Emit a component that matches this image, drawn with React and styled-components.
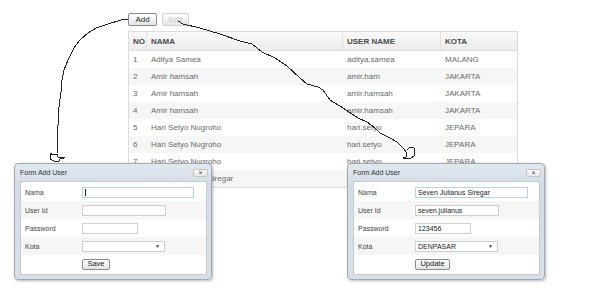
import React from "react"
import styled, { createGlobalStyle } from "styled-components"

const GlobalStyle = createGlobalStyle`
  html, body {
    margin: 0;
    padding: 0;
    background: #fff;
  }
  body {
    font-family: "Liberation Sans", Arial, sans-serif;
  }
`

const Stage = styled.div`
  position: relative;
  width: 600px;
  height: 300px;
  overflow: hidden;
  box-sizing: border-box;
  padding: 13px 0 0 128px;
`

const Toolbar = styled.div`
  display: flex;
  gap: 5px;
  height: 13px;
`

const Button = styled.button`
  font-family: inherit;
  font-size: ${(p) => p.$size || 8}px;
  height: ${(p) => p.$h || 13}px;
  width: ${(p) => p.$w}px;
  padding: 0;
  box-sizing: border-box;
  border: 1px solid ${(p) => (p.disabled ? "#d2d2d2" : "#8c8c8c")};
  border-radius: 2px;
  background: linear-gradient(#ffffff, #e4e4e4);
  color: ${(p) => (p.disabled ? "#c2c2c2" : "#222")};
  line-height: 1;
`

const Table = styled.div`
  margin-top: 5px;
  width: 390px;
  border: 1px solid #dcdcdc;
  box-sizing: border-box;
`

const Row = styled.div`
  display: grid;
  grid-template-columns: 17px 196px 98px 1fr;
  height: ${(p) => (p.$head ? 18 : 17)}px;
  align-items: center;
  background: ${(p) =>
    p.$head ? "linear-gradient(#fafafa, #ececec)" : p.$odd ? "#f6f6f6" : "#fff"};
  border-bottom: ${(p) => (p.$head ? "1px solid #dcdcdc" : "none")};
  font-size: 8px;
  font-weight: ${(p) => (p.$head ? "bold" : "normal")};
  color: ${(p) => (p.$head ? "#4a4a4a" : "#6a6a6a")};
`

const Cell = styled.div`
  height: 100%;
  display: flex;
  align-items: center;
  padding-left: ${(p) => (p.$first ? 3 : 4)}px;
  border-left: 1px solid ${(p) => (p.$head && !p.$first ? "#e2e2e2" : "transparent")};
  white-space: nowrap;
  overflow: hidden;
`

const Window = styled.div`
  position: absolute;
  left: ${(p) => p.$x}px;
  top: 163px;
  width: 198px;
  height: 117px;
  box-sizing: border-box;
  border: 1px solid #9ea9b4;
  border-radius: 4px;
  background: linear-gradient(#e1e9f0, #d4dde6 20px, #d8e0e7);
  box-shadow: 1px 1px 3px rgba(0, 0, 0, 0.28);
  padding: 0 4px 4px 5px;
  display: flex;
  flex-direction: column;
`

const WinHeader = styled.div`
  height: 18px;
  display: flex;
  align-items: center;
  justify-content: space-between;
  font-size: 7px;
  color: #333;
`

const CloseBtn = styled.div`
  width: 15px;
  height: 8px;
  margin-right: -1px;
  box-sizing: border-box;
  border: 1px solid #c4c4c4;
  border-radius: 2px;
  background: linear-gradient(#ffffff, #e6e6e6);
  font-size: 7px;
  line-height: 6px;
  text-align: center;
  color: #444;
`

const Panel = styled.div`
  flex: 1;
  background: #fff;
  border: 1px solid #c3cbd3;
  padding: 1px 0;
`

const FormRow = styled.div`
  display: grid;
  grid-template-columns: 56px 1fr;
  height: 18px;
  align-items: center;
  background: ${(p) => (p.$odd ? "#f6f6f6" : "#fff")};
  font-size: 7px;
  color: #444;
`

const Label = styled.div`
  padding-left: 4px;
`

const InputCell = styled.div`
  padding-left: 5px;
  display: flex;
  align-items: center;
`

const Field = styled.div`
  position: relative;
  width: ${(p) => p.$w}px;
  height: 11px;
  box-sizing: border-box;
  border: 1px solid ${(p) => (p.$focus ? "#b9d1ea" : "#cfcfcf")};
  background: #fff;
  font-size: 7px;
  line-height: 9px;
  padding: 0 2px;
  color: #222;
  white-space: nowrap;
  overflow: hidden;
`

const Caret = styled.span`
  display: inline-block;
  width: 1px;
  height: 7px;
  background: #222;
  vertical-align: middle;
`

const Arrow = styled.span`
  position: absolute;
  right: 4px;
  top: 0;
  font-size: 5px;
  line-height: 9px;
  color: #444;
`

const Overlay = styled.svg`
  position: absolute;
  left: 0;
  top: 0;
  pointer-events: none;
`

const users = [
  ["1", "Aditya Samea", "aditya.samea", "MALANG"],
  ["2", "Amir hamsah", "amir.ham", "JAKARTA"],
  ["3", "Amir hamsah", "amir.hamsah", "JAKARTA"],
  ["4", "Amir hamsah", "amir.hamsah", "JAKARTA"],
  ["5", "Hari Setyo Nugroho", "hari.setyo", "JEPARA"],
  ["6", "Hari Setyo Nugroho", "hari.setyo", "JEPARA"],
  ["7", "Hari Setyo Nugroho", "hari.setyo", "JEPARA"],
  ["8", "Seven Julianus Siregar", "seven.julianus", "DENPASAR"],
]

const UserForm = ({ x, data, action, actionWidth }) => (
  <Window $x={x}>
    <WinHeader>
      <span>Form Add User</span>
      <CloseBtn>×</CloseBtn>
    </WinHeader>
    <Panel>
      <FormRow>
        <Label>Nama</Label>
        <InputCell>
          <Field $w={data ? 113 : 112} $focus>
            {data ? data.nama : <Caret />}
          </Field>
        </InputCell>
      </FormRow>
      <FormRow $odd>
        <Label>User Id</Label>
        <InputCell>
          <Field $w={84}>{data && data.user}</Field>
        </InputCell>
      </FormRow>
      <FormRow>
        <Label>Password</Label>
        <InputCell>
          <Field $w={56}>{data && data.pass}</Field>
        </InputCell>
      </FormRow>
      <FormRow $odd>
        <Label>Kota</Label>
        <InputCell>
          <Field $w={83}>
            {data && data.kota}
            <Arrow>▼</Arrow>
          </Field>
        </InputCell>
      </FormRow>
      <FormRow>
        <span />
        <InputCell>
          <Button $w={actionWidth} $h={11} $size={7.5}>
            {action}
          </Button>
        </InputCell>
      </FormRow>
    </Panel>
  </Window>
)

export default function App() {
  return (
    <Stage>
      <GlobalStyle />
      <Toolbar>
        <Button $w={29}>Add</Button>
        <Button $w={27} disabled>
          Edit
        </Button>
      </Toolbar>
      <Table>
        <Row $head>
          <Cell $head $first>NO</Cell>
          <Cell $head>NAMA</Cell>
          <Cell $head>USER NAME</Cell>
          <Cell $head>KOTA</Cell>
        </Row>
        {users.map((u, i) => (
          <Row key={u[0]} $odd={i % 2 === 1}>
            <Cell $first>{u[0]}</Cell>
            <Cell>{u[1]}</Cell>
            <Cell>{u[2]}</Cell>
            <Cell>{u[3]}</Cell>
          </Row>
        ))}
      </Table>

      <UserForm x={14} action="Save" actionWidth={28} />
      <UserForm
        x={347}
        action="Update"
        actionWidth={35}
        data={{
          nama: "Seven Julianus Siregar",
          user: "seven.julianus",
          pass: "123456",
          kota: "DENPASAR",
        }}
      />

      <Overlay width="600" height="300" viewBox="0 0 600 300">
        <g fill="none" stroke="#222" strokeWidth="1" shapeRendering="crispEdges">
          <polyline points="128,19 121,20 108,24 96,28 88,33 80,40 74,48 68,60 64,70 62,80 61,92 59,107 58,125 57,140 57,153" />
          <polyline points="178,21 183,24 200,28 220,34 240,41 252,44 262,52 275,58 287,66 300,78 307,84 318,87 323,90 330,100 343,108 352,114 358,118 367,122 375,128 380,133 390,138 397,142 403,148" />
          <path d="M50,153 L50,159 L54,161 L59,161 L60,159 L64,158 L64,157 L58,157 L57,154 L53,155 Z" />
          <path d="M403,148 L407,153 L406,157 L403,158 L411,158 L414,156 L414,148 L410,147 L407,150" />
        </g>
      </Overlay>
    </Stage>
  )
}
